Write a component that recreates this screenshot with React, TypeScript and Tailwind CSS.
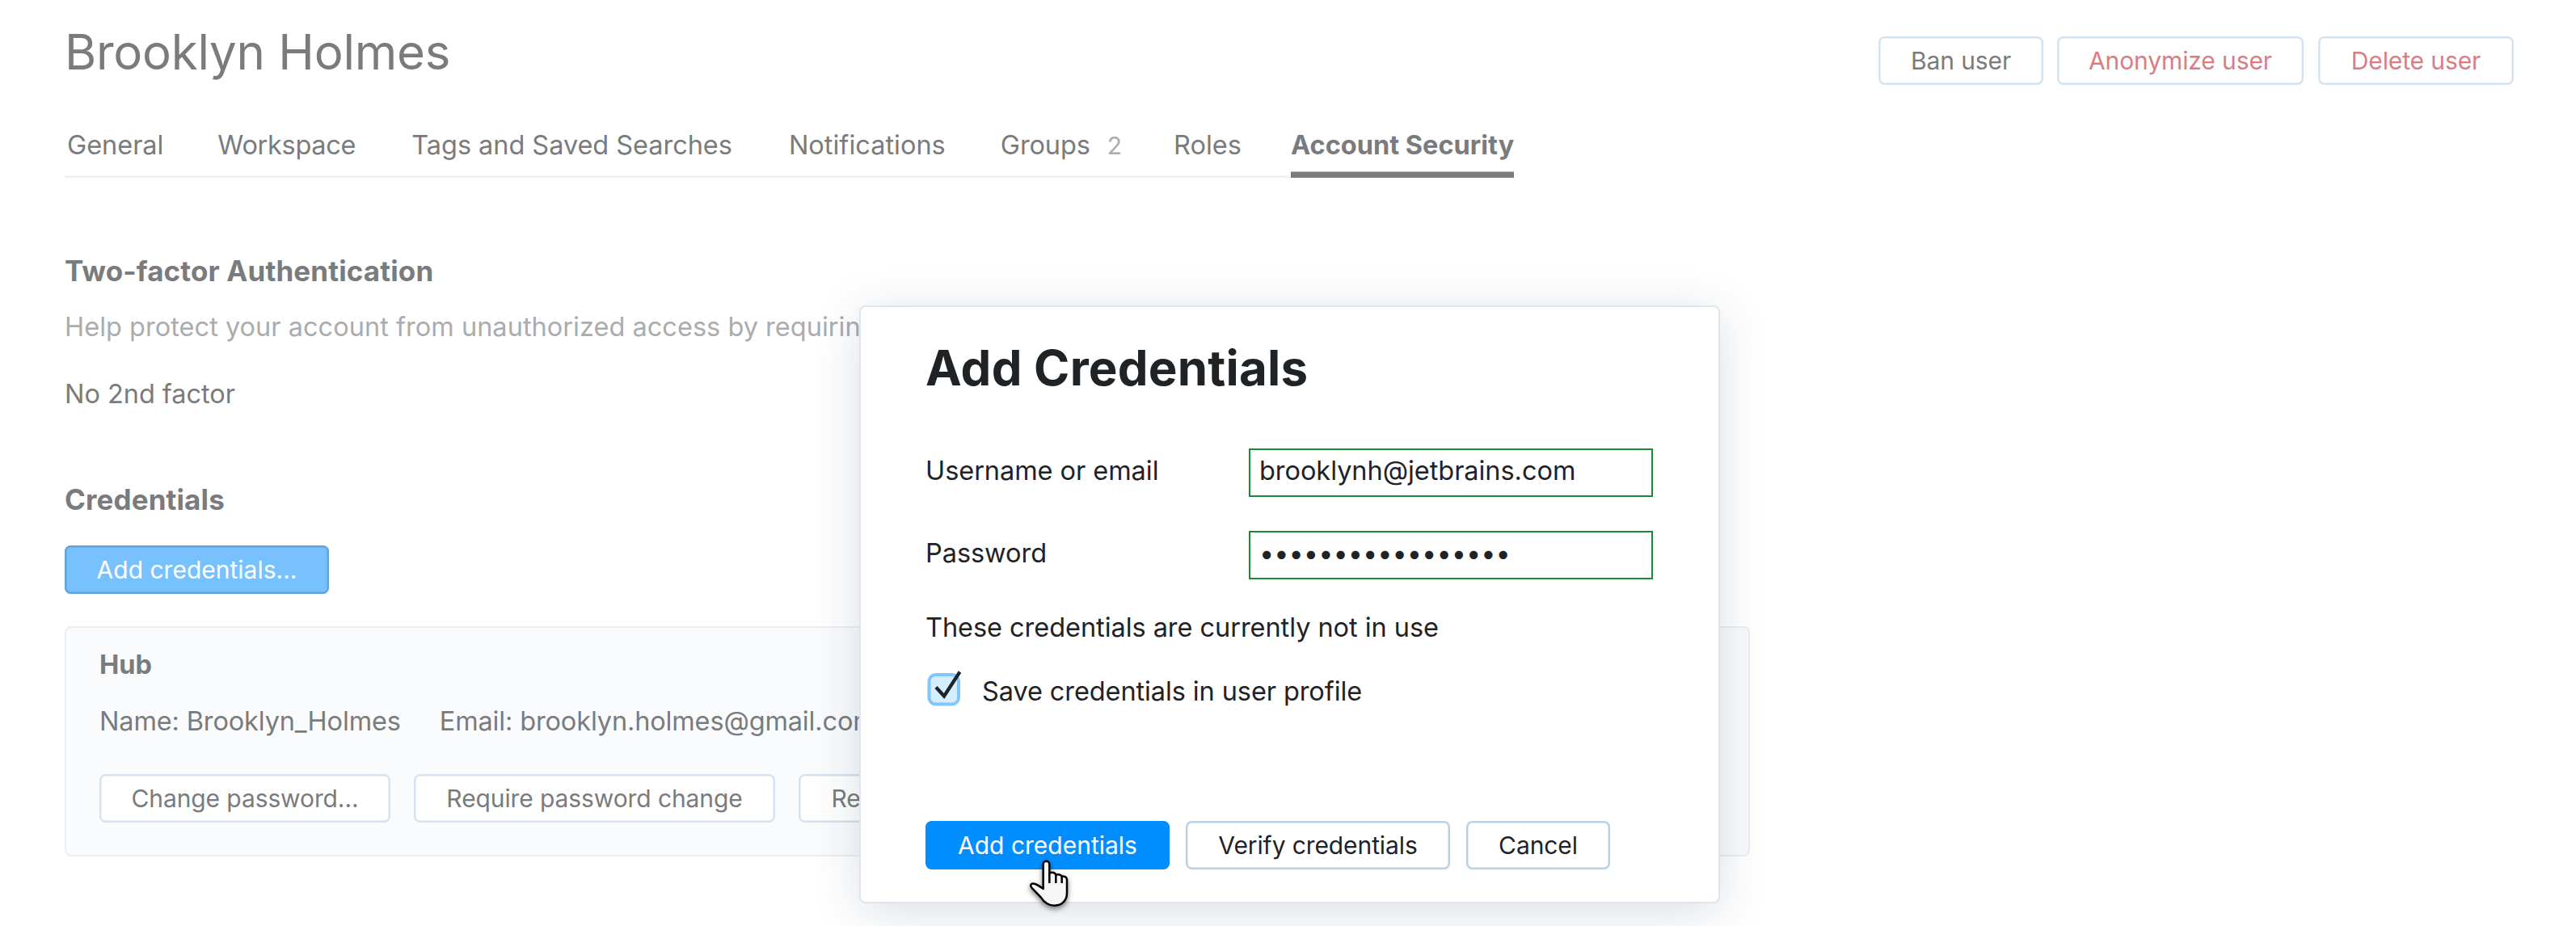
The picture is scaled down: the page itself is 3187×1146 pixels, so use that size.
import type { ReactNode } from 'react'
import clsx from 'clsx'

interface Tab {
  label: string
  count?: number
  className: string
  active?: boolean
}

const tabs: Tab[] = [
  { label: 'General', className: 'ml-[3px]' },
  { label: 'Workspace', className: 'ml-[67px] tracking-[-0.3px]' },
  { label: 'Tags and Saved Searches', className: 'ml-[69px]' },
  { label: 'Notifications', className: 'ml-[70px] tracking-normal' },
  { label: 'Groups', count: 2, className: 'ml-[68px] tracking-[-0.1px]' },
  { label: 'Roles', className: 'ml-[64px] tracking-normal' },
  { label: 'Account Security', className: 'ml-auto', active: true },
]

interface ButtonProps {
  variant?: 'primary' | 'default' | 'mutedPrimary' | 'muted' | 'mutedDanger'
  className?: string
  children: ReactNode
}

const variants = {
  primary: 'bg-[#008eff] text-white',
  default: 'bg-white text-[#1f2326] shadow-[inset_0_0_0_2.5px_#b8d1e5]',
  mutedPrimary: 'bg-[#77c1ff] text-white shadow-[inset_0_0_0_2.5px_#64a5dc]',
  muted: 'bg-white text-[#797b7d] shadow-[inset_0_0_0_2.5px_#d4e3ef]',
  mutedDanger: 'bg-white text-[#da7d83] shadow-[inset_0_0_0_2.5px_#d4e3ef]',
}

function Button({ variant = 'default', className, children }: ButtonProps) {
  return (
    <button
      type="button"
      className={clsx(
        'flex h-[60px] shrink-0 items-center justify-center whitespace-nowrap rounded-[7.5px] text-[30px] leading-[60px] tracking-[-0.1px]',
        variants[variant],
        className,
      )}
    >
      {children}
    </button>
  )
}

function Field({ label, children }: { label: string; children: ReactNode }) {
  return (
    <div className="flex h-[60px] leading-[40px]">
      <span className="w-[400px] pt-2">{label}</span>
      <div className="w-[500px] border-2 border-[#1b8833] bg-white pl-[11px] pt-1.5">{children}</div>
    </div>
  )
}

function Checkbox() {
  return (
    <svg className="-mt-1.5 ml-0.5 h-[46px] w-[46px]" viewBox="0 0 46 46" fill="none">
      <rect x="2.5" y="5" width="36.5" height="36.5" rx="8" fill="#d4edff" stroke="#80c6ff" strokeWidth="4" />
      <path d="M11 20.5 21 31.5 40.5 1.5" stroke="#1f2326" strokeWidth="4.2" />
    </svg>
  )
}

function HandCursor() {
  return (
    <svg
      className="absolute left-[190px] top-[670px] h-[90px] w-[90px] drop-shadow-[0_3px_3px_rgba(0,0,0,0.5)]"
      viewBox="0 0 270 270"
      fill="none"
      stroke="#000"
      strokeWidth="7.5"
      strokeLinejoin="round"
    >
      <path
        fill="#f7f7f7"
        d="M107 150V59a11.5 11.5 0 0 1 23 0v33c10-5 22-2 24 6 9-3 20-1 22 6 10-2 18 2 19 11v50c0 29-19 47-46 47-25 0-39-12-51-31L64 146c-8-12 1-19 13-14 11 4 20 11 30 18Z"
      />
      <path d="M130 90v39M154 97v32M176 103v26" />
    </svg>
  )
}

function AddCredentialsDialog() {
  return (
    <div className="absolute left-[1063px] top-[378px] h-[739.5px] w-[1065px] rounded-[8px] border-2 border-[#dfe5eb] bg-white pl-20 text-[#1f2326] shadow-[0_10px_60px_rgba(0,42,76,0.15)]">
      <h2 className="pt-[39px] text-[60px] font-bold leading-[72px] tracking-[0.2px]">Add Credentials</h2>
      <div className="mt-16 flex flex-col gap-[42px]">
        <Field label="Username or email">brooklynh@jetbrains.com</Field>
        <Field label="Password">
          <span className="tracking-normal">•••••••••••••••••</span>
        </Field>
      </div>
      <p className="mt-10 leading-[40px]">These credentials are currently not in use</p>
      <label className="mt-[39px] flex h-10 leading-[40px]">
        <Checkbox />
        <span className="ml-[22px] tracking-[-0.1px]">Save credentials in user profile</span>
      </label>
      <div className="mt-[140px] flex gap-5">
        <Button variant="primary" className="w-[302px] tracking-normal">
          Add credentials
        </Button>
        <Button className="w-[327px]">Verify credentials</Button>
        <Button className="w-[178px]">Cancel</Button>
      </div>
      <HandCursor />
    </div>
  )
}

export default function App() {
  return (
    <div className="relative h-[1146px] w-full overflow-hidden bg-white font-[Inter,sans-serif] text-[32.5px] tracking-[-0.05px] text-[#797b7d]">
      <header className="flex justify-between pl-20 pr-[77px] pt-7">
        <h1 className="text-[60px] leading-[72px] tracking-[-0.25px]">Brooklyn Holmes</h1>
        <div className="mt-[17px] flex h-[55px]">
          <Button variant="muted" className="w-[204px]">
            Ban user
          </Button>
          <Button variant="mutedDanger" className="ml-[17px] w-[305px]">
            Anonymize user
          </Button>
          <Button variant="mutedDanger" className="ml-[18px] w-[242px]">
            Delete user
          </Button>
        </div>
      </header>

      <main className="pl-20">
        <nav className="mt-[60px] flex h-[60px] w-[1793px] whitespace-nowrap leading-[40px] shadow-[inset_0_-2.5px_0_#ebeef2]">
          {tabs.map((tab) => (
            <a
              key={tab.label}
              className={clsx(
                'shrink-0',
                tab.className,
                tab.active && 'w-[276px] font-bold tracking-normal shadow-[inset_0_-7.5px_0_#797b7d]',
              )}
            >
              {tab.label}
              {tab.count ? <span className="ml-[21px] text-[30px] text-[#abacad]">{tab.count}</span> : null}
            </a>
          ))}
        </nav>

        <section className="whitespace-nowrap">
          <h3 className="mt-[93px] text-[35px] font-bold leading-[44px] tracking-[0.12px]">Two-factor Authentication</h3>
          <p className="mt-7 leading-[40px] tracking-[0.02px] text-[#abacad]">
            Help protect your account from unauthorized access by requiring a second factor
          </p>
          <p className="mt-[43px] leading-[40px]">No 2nd factor</p>
        </section>

        <section className="whitespace-nowrap">
          <h3 className="mb-[35px] mt-[88px] text-[35px] font-bold leading-[44px] tracking-[0.12px]">Credentials</h3>
          <Button variant="mutedPrimary" className="w-[327px] tracking-normal">
            Add credentials...
          </Button>
          <div className="mt-10 h-[285px] w-[2085px] rounded-[8px] border-2 border-[#ebeff3] bg-[#fafbfd] pl-[41px] pt-[26px] leading-[40px]">
            <h4 className="font-bold">Hub</h4>
            <div className="mt-[30px] flex gap-[48px] tracking-[-0.15px]">
              <span>Name: Brooklyn_Holmes</span>
              <span>Email: brooklyn.holmes@gmail.com</span>
            </div>
            <div className="mt-[45px] flex gap-[29px]">
              <Button variant="muted" className="w-[360px]">
                Change password...
              </Button>
              <Button variant="muted" className="w-[447px]">
                Require password change
              </Button>
              <Button variant="muted" className="w-[220px]">
                Remove...
              </Button>
            </div>
          </div>
        </section>
      </main>

      <AddCredentialsDialog />
    </div>
  )
}
